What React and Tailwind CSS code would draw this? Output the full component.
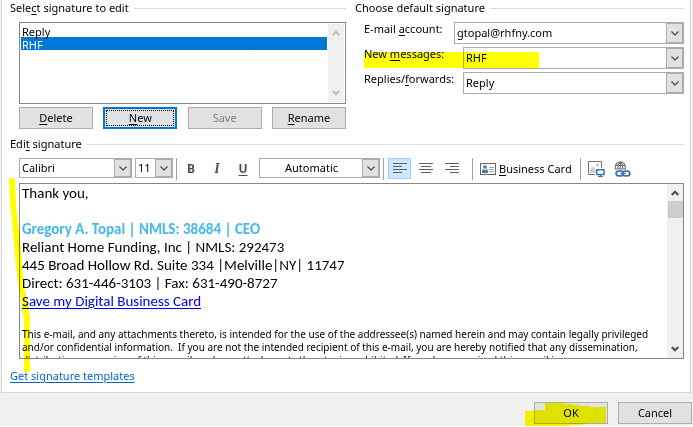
import { useState } from "react";

function Chevron({ className = "" }) {
  return (
    <svg viewBox="0 0 8 5" className={`h-[5px] w-2 ${className}`} fill="none" stroke="currentColor" strokeWidth="1.3" aria-hidden="true">
      <path d="M0.5 0.5 4 4 7.5 0.5" />
    </svg>
  );
}

function ScrollArrow({ up = false, className = "" }) {
  return (
    <svg viewBox="0 0 8 6" className={`h-1.5 w-2 ${className}`} fill="none" stroke="currentColor" strokeWidth="2.2" aria-hidden="true">
      <path d={up ? "M0.7 5 4 1.7 7.3 5" : "M0.7 1 4 4.3 7.3 1"} />
    </svg>
  );
}

function Combo({ id, label, value, options, className = "", textClass = "pl-0.5" }) {
  const [current, setCurrent] = useState(value);
  return (
    <div className={`grid border border-[#acacac] bg-white ${className}`}>
      <select
        id={id}
        aria-label={label}
        value={current}
        onChange={(e) => setCurrent(e.target.value)}
        className={`col-start-1 row-start-1 h-full w-full appearance-none bg-transparent pr-4 outline-none ${textClass}`}
      >
        {options.map((o) => (
          <option key={o}>{o}</option>
        ))}
      </select>
      <span className="pointer-events-none col-start-1 row-start-1 flex w-[17px] items-center justify-center justify-self-end border border-[#acacac] bg-[#e1e1e1] text-[#505050]">
        <Chevron />
      </span>
    </div>
  );
}

function GroupTitle({ children }) {
  return (
    <div className="flex h-4 items-center gap-[5px]">
      <h2 className="leading-4 whitespace-nowrap">{children}</h2>
      <div className="h-px flex-1 bg-[#dcdcdc]" />
    </div>
  );
}

function PushButton({ children, className = "border border-[#adadad]", ...rest }) {
  return (
    <button type="button" className={`h-[22px] w-[74px] bg-[#e1e1e1] leading-4 ${className}`} {...rest}>
      {children}
    </button>
  );
}

function Divider() {
  return <div className="h-[22px] w-px bg-[#a0a0a0]" />;
}

function AlignIcon({ d }) {
  return (
    <svg viewBox="0 0 14 11" className="h-[11px] w-3.5" stroke="#606060" strokeWidth="1" shapeRendering="crispEdges" aria-hidden="true">
      <path d={d} />
    </svg>
  );
}

const U = ({ children }) => <span className="underline underline-offset-2">{children}</span>;

function SignaturePicker() {
  const [selected, setSelected] = useState("RHF");
  return (
    <section className="w-[336px]">
      <GroupTitle>
        <label htmlFor="signatures">Sele<U>c</U>t signature to edit</label>
      </GroupTitle>
      <div className="mt-1.5 ml-[9px]">
        <div className="flex h-[82px] gap-px border border-[#828790] bg-white p-px">
          <select
            id="signatures"
            size={6}
            value={selected}
            onChange={(e) => setSelected(e.target.value)}
            className="flex-1 overflow-hidden bg-white outline-none"
          >
            <option className="h-[13px] min-h-0 px-px leading-[13px] checked:bg-linear-to-r checked:from-[#0078d7] checked:to-[#0078d7] checked:[-webkit-text-fill-color:white]">Reply</option>
            <option className="h-[13px] min-h-0 px-px leading-[13px] checked:bg-linear-to-r checked:from-[#0078d7] checked:to-[#0078d7] checked:[-webkit-text-fill-color:white]">RHF</option>
          </select>
          <div className="flex w-4 flex-col items-center justify-between bg-[#f0f0f0] py-1.5 text-[#bfbfbf]">
            <ScrollArrow up />
            <ScrollArrow />
          </div>
        </div>
        <div className="mt-[3px] flex justify-between">
          <PushButton><U>D</U>elete</PushButton>
          <PushButton className="border-2 border-[#0078d7] p-px">
            <span className="flex h-full items-center justify-center border border-dotted border-black"><span><U>N</U>ew</span></span>
          </PushButton>
          <PushButton className="border border-[#adadad] text-[#808080]" disabled>Save</PushButton>
          <PushButton><U>R</U>ename</PushButton>
        </div>
      </div>
    </section>
  );
}

function DefaultSignature() {
  return (
    <section className="flex-1">
      <GroupTitle>Choose default signature</GroupTitle>
      <div className="mt-1.5 ml-[9px] flex flex-col gap-[3px]">
        <div className="flex">
          <label htmlFor="account" className="w-[90px] leading-3.5">E-mail <U>a</U>ccount:</label>
          <Combo id="account" value="gtopal@rhfny.com" options={["gtopal@rhfny.com"]} className="h-[22px] flex-1" />
        </div>
        <div className="relative flex">
          <label htmlFor="new-messages" className="w-[99px] leading-3.5">New <U>m</U>essages:</label>
          <Combo id="new-messages" value="RHF" options={["RHF", "Reply"]} className="h-[22px] flex-1" />
          <div className="pointer-events-none absolute top-[5px] left-0 h-4 w-[175px] bg-[#ffff00] mix-blend-multiply" />
        </div>
        <div className="flex">
          <label htmlFor="replies" className="w-[99px] leading-3.5">Replies/<U>f</U>orwards:</label>
          <Combo id="replies" value="Reply" options={["Reply", "RHF"]} className="h-[22px] flex-1" />
        </div>
      </div>
    </section>
  );
}

function Toolbar() {
  return (
    <div className="flex h-[22px] items-start" role="toolbar" aria-label="Formatting">
      <Combo label="Font" value="Calibri" options={["Calibri", "Arial"]} className="h-5 w-[113px]" />
      <Combo label="Font size" value="11" options={["11", "12"]} className="ml-[3px] h-5 w-[38px]" />
      <div className="ml-[3px]"><Divider /></div>
      <div className="ml-px flex text-[12px] leading-5 text-[#505050]">
        <button type="button" aria-label="Bold" className="h-[22px] w-[26px] font-bold">B</button>
        <button type="button" aria-label="Italic" className="h-[22px] w-[26px] font-['Liberation_Serif',serif] text-[14px] font-bold italic">I</button>
        <button type="button" aria-label="Underline" className="h-[22px] w-[26px] font-bold underline underline-offset-2">U</button>
      </div>
      <Combo label="Font color" value="Automatic" options={["Automatic"]} className="ml-[3px] h-5 w-[121px]" textClass="pl-[25px]" />
      <div className="ml-[3px]"><Divider /></div>
      <div className="ml-1 flex gap-[3px]">
        <button type="button" aria-label="Align left" className="flex h-[21px] w-[23px] items-center justify-center border border-[#99d1ff] bg-[#cce8ff]">
          <AlignIcon d="M0 .5H14M0 3.5H9M0 6.5H14M0 9.5H9" />
        </button>
        <button type="button" aria-label="Center" className="flex h-[21px] w-[23px] items-center justify-center">
          <AlignIcon d="M0 .5H14M2 3.5H12M0 6.5H14M2 9.5H12" />
        </button>
        <button type="button" aria-label="Align right" className="flex h-[21px] w-[23px] items-center justify-center">
          <AlignIcon d="M0 .5H14M5 3.5H14M0 6.5H14M5 9.5H14" />
        </button>
      </div>
      <div className="ml-[9px]"><Divider /></div>
      <button type="button" className="ml-[7px] flex h-[22px] items-center gap-[3px] whitespace-nowrap">
        <svg viewBox="0 0 16 12" className="h-3 w-4" aria-hidden="true">
          <rect x=".5" y=".5" width="15" height="11" fill="white" stroke="#666" />
          <circle cx="5" cy="4" r="1.8" fill="#3b78b5" />
          <path d="M2 10V8.2Q2 6.3 4 6.3L5 7.3 6 6.3Q8 6.3 8 8.2V10Z" fill="#3b78b5" />
          <path d="M9 4.5H14M9 6.5H14M9 8.5H14" stroke="#a6a6a6" />
        </svg>
        <span><U>B</U>usiness Card</span>
      </button>
      <div className="ml-2"><Divider /></div>
      <button type="button" aria-label="Insert picture" className="ml-[7px] flex h-[22px] items-center">
        <svg viewBox="0 0 17 16" className="h-4 w-[17px]" fill="none" aria-hidden="true">
          <path d="M7 13.5H.5V.5H13.5V7" stroke="#707070" />
          <path d="M2 12V8L4.5 5.5 8 9V12Z" fill="#c5d2e0" />
          <circle cx="9.5" cy="4" r="1.7" fill="#f2c57c" />
          <rect x="8.8" y="8.8" width="7.2" height="4.7" fill="white" stroke="#3b78b5" strokeWidth="1.5" />
          <path d="M10 15.4H15M12.5 13.5V15.4" stroke="#3b78b5" strokeWidth="1.2" />
        </svg>
      </button>
      <button type="button" aria-label="Insert hyperlink" className="ml-[9px] flex h-[22px] items-center">
        <svg viewBox="0 0 17 16" className="h-4 w-[17px]" fill="none" aria-hidden="true">
          <path d="M1.3 8.5V6A5 5.3 0 0 1 11.3 6V8.5M1 4.5H11.6M1 8H12M6.3 .7V8M4 8Q3.4 3 6.3 .7Q9.2 3 8.6 8" stroke="#707070" strokeWidth="1.1" />
          <rect x="2.2" y="10.2" width="7" height="4.6" rx="2.3" stroke="#3b78b5" strokeWidth="1.8" />
          <rect x="8.8" y="10.2" width="7" height="4.6" rx="2.3" stroke="#3b78b5" strokeWidth="1.8" />
          <path d="M6.5 12.5H11.5" stroke="#3b78b5" strokeWidth="1.5" />
        </svg>
      </button>
    </div>
  );
}

function Editor() {
  return (
    <div className="mt-[3px] flex h-[176px] border border-[#828790] bg-white">
      <div
        role="textbox"
        aria-label="Signature"
        aria-multiline="true"
        contentEditable
        suppressContentEditableWarning
        className="min-w-0 flex-1 overflow-hidden pl-0.5 font-[Carlito,Calibri,'Open_Sans',sans-serif] text-[15px] leading-[18px] whitespace-nowrap outline-none"
      >
        <p>Thank you,</p>
        <p><br /></p>
        <p className="font-bold text-[#45b8ee]">Gregory A. Topal | NMLS: 38684 | CEO</p>
        <p>Reliant Home Funding, Inc | NMLS: 292473</p>
        <p>445 Broad Hollow Rd. Suite 334 |Melville|NY| 11747</p>
        <p>Direct: 631-446-3103 | Fax: 631-490-8727</p>
        <p><a href="#card" className="text-[#0000ee] underline underline-offset-2">Save my Digital Business Card</a></p>
        <div className="mt-[18px] font-['Noto_Sans','Open_Sans',sans-serif] text-[10px] leading-[13px] whitespace-pre">
          <p>This e-mail, and any attachments thereto, is intended for the use of the addressee(s) named herein and may contain legally privileged</p>
          <p>and/or confidential information.  If you are not the intended recipient of this e-mail, you are hereby notified that any dissemination,</p>
          <p>distribution or copying of this e-mail, and any attachments thereto, is prohibited. If you have received this e-mail in error,</p>
        </div>
      </div>
      <div className="flex w-4 flex-col items-center bg-[#f0f0f0] pt-1.5 pb-1.5 text-[#505050]">
        <ScrollArrow up />
        <div className="mt-[5px] h-[17px] w-[15px] bg-[#cdcdcd]" />
        <ScrollArrow className="mt-auto" />
      </div>
    </div>
  );
}

export default function App() {
  return (
    <div className="bg-[#f0f0f0] font-['Noto_Sans','Open_Sans',sans-serif] text-[11px] text-black">
      <main className="mr-0.5 ml-px border-x border-b border-[#d9d9d9] bg-white pr-1.5 pb-2 pl-2">
        <div className="flex gap-[9px]">
          <SignaturePicker />
          <DefaultSignature />
        </div>
        <section className="relative mt-[7px]">
          <GroupTitle>Edi<U>t</U> signature</GroupTitle>
          <div className="mt-1.5 ml-[9px]">
            <Toolbar />
            <Editor />
          </div>
          <svg viewBox="0 0 22 194" className="pointer-events-none absolute top-[42px] -left-px h-[194px] w-[22px] mix-blend-multiply" aria-hidden="true">
            <path d="M0 0H6L7 29 9 44 12 72 15 109 19 127 21 140V194H15V142L13 130 12 122 10 112 8 99 5 67 3 42 1 25Z" fill="#ffff00" />
          </svg>
        </section>
        <a href="#templates" className="mt-[9px] block w-fit leading-4 text-[#0066cc] underline underline-offset-2">Get signature templates</a>
      </main>
      <footer className="relative flex h-[33px] items-start justify-end gap-2.5 pt-[9px] pr-px">
        <PushButton>OK</PushButton>
        <PushButton>Cancel</PushButton>
        <svg viewBox="0 0 82 25" className="pointer-events-none absolute top-2.5 right-[86px] h-[25px] w-[82px] mix-blend-multiply" aria-hidden="true">
          <path d="M0 8H10V7H20V0H40V1H48V2H55V3H65V4H81V20H65L58 21V22H45V23H36V24H0Z" fill="#ffff00" />
        </svg>
      </footer>
    </div>
  );
}
